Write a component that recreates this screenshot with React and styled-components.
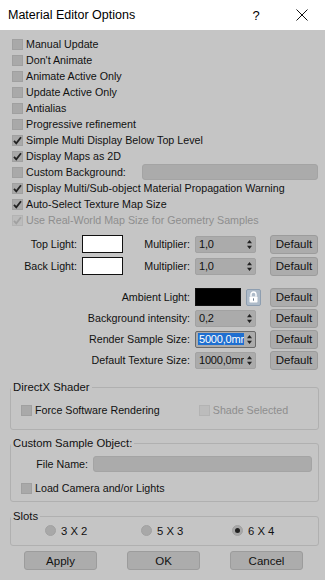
import React from 'react'
import styled, { createGlobalStyle } from 'styled-components'

const Global = createGlobalStyle`
    html, body {
        margin:0;
        padding:0;
        background:#c5c5c5;
    }
    body {
        font-family:'Liberation Sans', Arial, sans-serif;
        font-size:10.7px;
        color:#111;
    }
`

const Window = styled.div`
    width:325px;
    height:580px;
    background:#c5c5c5;
    overflow:hidden;
`
const TitleBar = styled.div`
    height:30px;
    background:#fff;
    display:flex;
    align-items:center;
    padding-left:8px;
    font-size:12.5px;
    color:#000;
    span{
        flex:1;
    }
`
const TitleButton = styled.div`
    width:46px;
    height:30px;
    display:flex;
    align-items:center;
    justify-content:center;
    font-size:13px;
`
const Body = styled.div`
    padding:6px 6px 0 6px;
`
const CheckList = styled.div`
    display:flex;
    flex-direction:column;
`
const CheckRow = styled.label`
    height:16px;
    display:flex;
    align-items:center;
    gap:3px;
    padding-left:${p => p.$indent ?? 6}px;
    color:${p => p.$disabled ? '#8e8e8e' : '#111'};
    white-space:nowrap;
`
const Box = styled.span`
    width:11px;
    height:11px;
    box-sizing:border-box;
    background:${p => p.$disabled ? '#bcbcbc' : '#a9a9a9'};
    border:1px solid ${p => p.$disabled ? '#b3b3b3' : '#a0a0a0'};
    display:flex;
    align-items:center;
    justify-content:center;
    flex:none;
`
const Field = styled.div`
    flex:1;
    height:16px;
    box-sizing:border-box;
    margin-left:${p => p.$left ?? 0}px;
    margin-right:${p => p.$right ?? 0}px;
    background:#ababab;
    border:1px solid #a4a4a4;
    border-radius:3px;
`
const LightRow = styled.div`
    display:flex;
    align-items:center;
    height:18px;
    margin-top:${p => p.$top ?? 0}px;
`
const Label = styled.div`
    width:${p => p.$w}px;
    text-align:right;
    padding-right:5px;
    box-sizing:border-box;
    white-space:nowrap;
    flex:none;
`
const Swatch = styled.div`
    width:${p => p.$w}px;
    height:18px;
    box-sizing:border-box;
    background:${p => p.$color};
    border:1px solid #111;
    flex:none;
`
const Spinner = styled.div`
    width:61px;
    height:17px;
    box-sizing:border-box;
    background:#ababab;
    border:1px solid ${p => p.$focus ? '#6a6a6a' : '#a2a2a2'};
    border-radius:2px;
    display:flex;
    align-items:center;
    padding:0 3px 0 2px;
    flex:none;
    overflow:hidden;
`
const SpinText = styled.span`
    flex:1;
    overflow:hidden;
    white-space:nowrap;
    font-size:11px;
    letter-spacing:-0.2px;
    padding:0 1px;
    background:${p => p.$selected ? '#1f6fd0' : 'transparent'};
    color:${p => p.$selected ? '#fff' : '#111'};
    margin-right:3px;
`
const DefaultButton = styled.button`
    width:${p => p.$w ?? 48}px;
    height:19px;
    box-sizing:border-box;
    margin-left:${p => p.$left ?? 14}px;
    background:#acacac;
    border:1px solid #9c9c9c;
    border-radius:3px;
    font-family:inherit;
    font-size:11.5px;
    color:#111;
    padding:0;
    flex:none;
`
const LockButton = styled.div`
    width:15px;
    height:17px;
    margin-left:5px;
    box-sizing:border-box;
    background:#aebbc9;
    border:1px solid #8e9eb0;
    border-radius:2px;
    display:flex;
    align-items:center;
    justify-content:center;
    flex:none;
`
const Group = styled.fieldset`
    margin:${p => p.$top ?? 0}px 0 0 4px;
    width:309px;
    min-width:0;
    box-sizing:border-box;
    border:1px solid #b0b0b0;
    border-radius:3px;
    padding:${p => p.$pad || '4px 0 6px 0'};
    legend{
        padding:0 2px;
        margin-left:0;
        font-size:11.3px;
    }
`
const GroupRow = styled.div`
    display:flex;
    align-items:center;
    height:${p => p.$h ?? 16}px;
    margin-top:${p => p.$top ?? 0}px;
`
const Radios = styled.div`
    display:grid;
    grid-template-columns:96px 91px 80px;
    padding-left:34px;
    height:17px;
    align-items:center;
`
const Radio = styled.label`
    display:flex;
    align-items:center;
    gap:5px;
    font-size:11.3px;
    span{
        width:11px;
        height:11px;
        border-radius:50%;
        background:#a8a8a8;
        border:1px solid #a2a2a2;
        box-sizing:border-box;
        display:flex;
        align-items:center;
        justify-content:center;
    }
    span i{
        width:5px;
        height:5px;
        border-radius:50%;
        background:#222;
    }
`
const ButtonBar = styled.div`
    display:flex;
    gap:30px;
    padding-left:18px;
    margin-top:5px;
`

const Check = ({ color }) => (
    <svg width="9" height="9" viewBox="0 0 9 9">
        <path d="M1 4.8 L3.3 7.4 L8 1.2" fill="none" stroke={color} strokeWidth="1.8" />
    </svg>
)

const CheckItem = ({ checked, disabled, indent, children }) => (
    <CheckRow $disabled={disabled} $indent={indent}>
        <Box $disabled={disabled}>{checked && <Check color={disabled ? '#a0a0a0' : '#222'} />}</Box>
        <span>{children}</span>
    </CheckRow>
)

const Arrows = () => (
    <svg width="5" height="9" viewBox="0 0 5 9">
        <path d="M2.5 0 L5 3.2 L0 3.2 Z M2.5 9 L5 5.8 L0 5.8 Z" fill="#222" />
    </svg>
)

const SpinBox = ({ value, selected }) => (
    <Spinner $focus={selected}>
        <SpinText $selected={selected}>{value}</SpinText>
        <Arrows />
    </Spinner>
)

const Lock = () => (
    <svg width="9" height="12" viewBox="0 0 9 12">
        <path d="M2 5.5 V3.5 A2.5 2.5 0 0 1 7 3.5 V5.5" fill="none" stroke="#fff" strokeWidth="1.4" />
        <rect x="0.5" y="5.5" width="8" height="6" rx="0.8" fill="#fff" />
        <rect x="4" y="7.3" width="1" height="2.4" fill="#6f7f92" />
    </svg>
)

const options = [
    ['Manual Update', false],
    ["Don't Animate", false],
    ['Animate Active Only', false],
    ['Update Active Only', false],
    ['Antialias', false],
    ['Progressive refinement', false],
    ['Simple Multi Display Below Top Level', true],
    ['Display Maps as 2D', true],
]

export default function App() {
    return (
        <Window>
            <Global />
            <TitleBar>
                <span>Material Editor Options</span>
                <TitleButton>?</TitleButton>
                <TitleButton>
                    <svg width="12" height="12" viewBox="0 0 12 12">
                        <path d="M0.5 0.5 L11.5 11.5 M11.5 0.5 L0.5 11.5" stroke="#111" strokeWidth="1" />
                    </svg>
                </TitleButton>
            </TitleBar>
            <Body>
                <CheckList>
                    {options.map(([t, c]) => <CheckItem key={t} checked={c}>{t}</CheckItem>)}
                    <CheckRow>
                        <Box />
                        <span>Custom Background:</span>
                        <Field $left={13} $right={1} />
                    </CheckRow>
                    <CheckItem checked>Display Multi/Sub-object Material Propagation Warning</CheckItem>
                    <CheckItem checked>Auto-Select Texture Map Size</CheckItem>
                    <CheckItem checked disabled>Use Real-World Map Size for Geometry Samples</CheckItem>
                </CheckList>

                <LightRow $top={7}>
                    <Label $w={76}>Top Light:</Label>
                    <Swatch $w={41} $color="#fff" />
                    <Label $w={72}>Multiplier:</Label>
                    <SpinBox value="1,0" />
                    <DefaultButton>Default</DefaultButton>
                </LightRow>
                <LightRow $top={4}>
                    <Label $w={76}>Back Light:</Label>
                    <Swatch $w={41} $color="#fff" />
                    <Label $w={72}>Multiplier:</Label>
                    <SpinBox value="1,0" />
                    <DefaultButton>Default</DefaultButton>
                </LightRow>

                <LightRow $top={13}>
                    <Label $w={189}>Ambient Light:</Label>
                    <Swatch $w={46} $color="#000" />
                    <LockButton><Lock /></LockButton>
                    <DefaultButton $left={9}>Default</DefaultButton>
                </LightRow>
                <LightRow $top={3}>
                    <Label $w={189}>Background intensity:</Label>
                    <SpinBox value="0,2" />
                    <DefaultButton>Default</DefaultButton>
                </LightRow>
                <LightRow $top={3}>
                    <Label $w={189}>Render Sample Size:</Label>
                    <SpinBox value="5000,0mm" selected />
                    <DefaultButton>Default</DefaultButton>
                </LightRow>
                <LightRow $top={3}>
                    <Label $w={189}>Default Texture Size:</Label>
                    <SpinBox value="1000,0mm" />
                    <DefaultButton>Default</DefaultButton>
                </LightRow>

                <Group $top={12} $pad="9px 0 11px 0">
                    <legend>DirectX Shader</legend>
                    <GroupRow>
                        <CheckItem indent={10}>Force Software Rendering</CheckItem>
                        <CheckItem indent={39} disabled>Shade Selected</CheckItem>
                    </GroupRow>
                </Group>

                <Group $top={7} $pad="6px 0 5px 0">
                    <legend>Custom Sample Object:</legend>
                    <GroupRow $h={17}>
                        <Label $w={82}>File Name:</Label>
                        <Field $right={6} />
                    </GroupRow>
                    <GroupRow $top={8}>
                        <CheckItem indent={10}>Load Camera and/or Lights</CheckItem>
                    </GroupRow>
                </Group>

                <Group $top={8} $pad="0 0 6px 0">
                    <legend>Slots</legend>
                    <Radios>
                        <Radio><span /> 3 X 2</Radio>
                        <Radio><span /> 5 X 3</Radio>
                        <Radio><span><i /></span> 6 X 4</Radio>
                    </Radios>
                </Group>

                <ButtonBar>
                    <DefaultButton $w={73} $left={0}>Apply</DefaultButton>
                    <DefaultButton $w={73} $left={0}>OK</DefaultButton>
                    <DefaultButton $w={73} $left={0}>Cancel</DefaultButton>
                </ButtonBar>
            </Body>
        </Window>
    )
}
